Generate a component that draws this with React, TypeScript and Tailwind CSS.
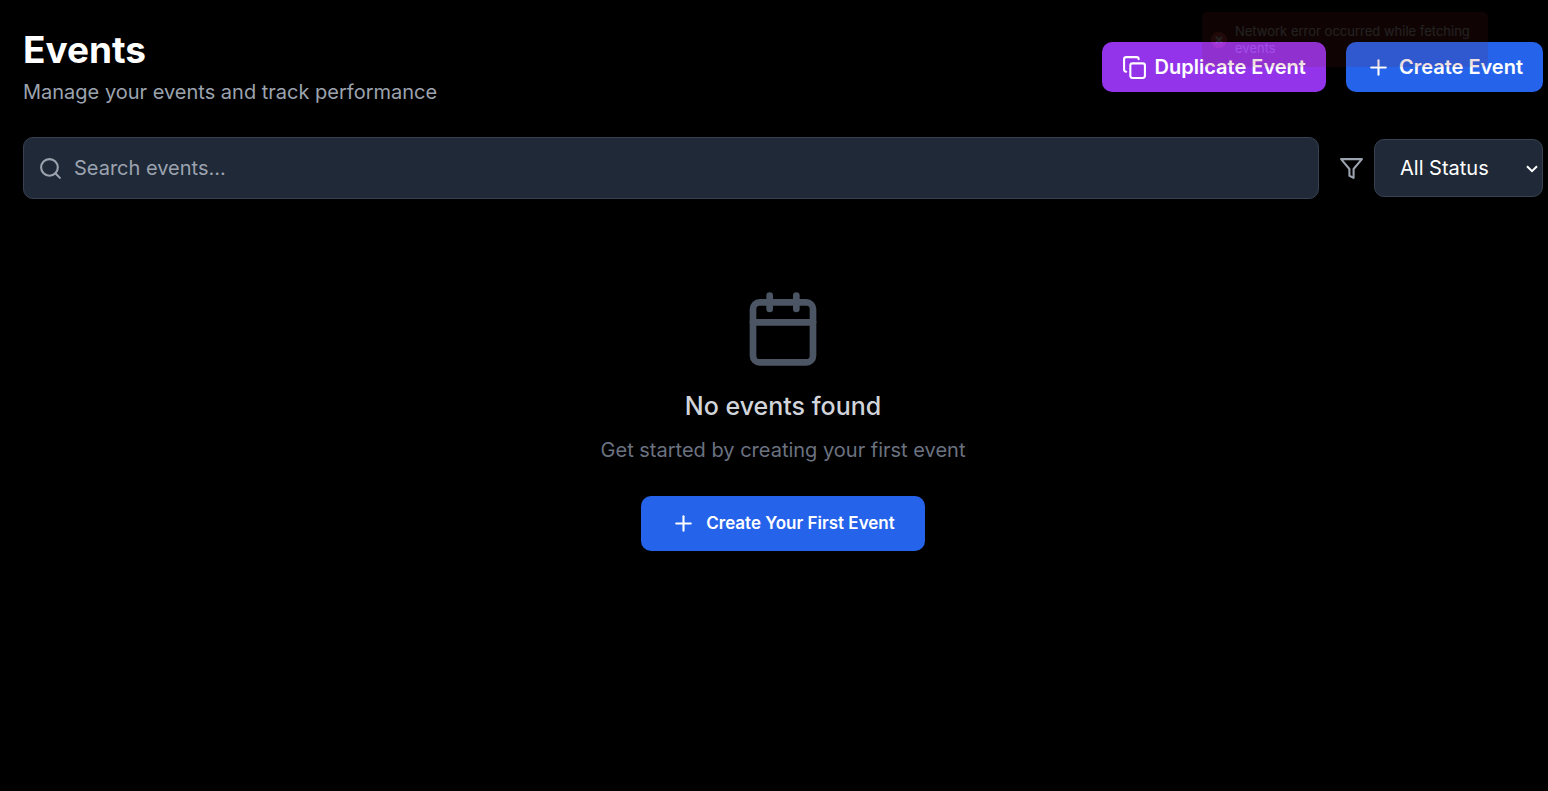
import { Calendar, Copy, Plus, Search } from "lucide-react";

export default function App() {
  return (
    <div className="min-h-screen bg-black pt-[25px] pr-[5px] pb-6 pl-[23px] font-['Inter',sans-serif] text-white">
      <header className="flex items-center justify-between">
        <div>
          <h1 className="text-[37px] leading-[50px] font-bold">Events</h1>
          <p className="text-[20px] leading-[34px] text-[#9ca3af]">Manage your events and track performance</p>
        </div>
        <div className="flex items-center gap-5">
          <button type="button" className="flex h-[50px] items-center gap-2 rounded-[10px] bg-[#9333ea] px-5 text-[20px] font-semibold">
            <Copy size={25} aria-hidden="true" />
            Duplicate Event
          </button>
          <button type="button" className="flex h-[50px] items-center gap-2 rounded-[10px] bg-[#2563eb] px-5 text-[20px] font-semibold">
            <Plus size={25} aria-hidden="true" />
            Create Event
          </button>
        </div>
      </header>

      <div className="mt-7 flex items-center gap-5">
        <label className="flex h-[62px] flex-1 items-center gap-[11px] rounded-[10px] border border-[#374151] bg-[#1f2937] px-3.5">
          <Search size={25} className="shrink-0 text-[#9ca3af]" aria-hidden="true" />
          <input
            type="search"
            aria-label="Search events"
            placeholder="Search events..."
            className="w-full bg-transparent text-[20px] outline-none placeholder:text-[#9ca3af]"
          />
        </label>
        <div className="flex items-center gap-2.5">
          <svg width="25" height="25" viewBox="0 0 24 24" fill="none" stroke="currentColor" strokeWidth="2" strokeLinejoin="round" className="text-[#9ca3af]" aria-hidden="true">
            <path d="M22 3H2l8 9.46V19l4 2v-8.54L22 3z" />
          </svg>
          <div className="relative">
            <select aria-label="Status" defaultValue="all" className="h-[58px] w-[169px] appearance-none rounded-[10px] border border-[#374151] bg-[#1f2937] pl-[25px] text-[20px] text-white">
              <option value="all">All Status</option>
            </select>
            <svg width="12" height="8" viewBox="0 0 12 8" fill="none" stroke="#fff" strokeWidth="2" className="pointer-events-none absolute top-[26px] right-[5px]" aria-hidden="true">
              <path d="M1 1.2l5 5 5-5" />
            </svg>
          </div>
        </div>
      </div>

      <main className="flex flex-col items-center pt-[90px]">
        <Calendar size={80} className="text-[#4b5563]" aria-hidden="true" />
        <h2 className="mt-5 text-[25px] leading-[35px] font-medium text-[#d1d5db]">No events found</h2>
        <p className="mt-2.5 text-[20px] leading-[32px] text-[#6b7280]">Get started by creating your first event</p>
        <button type="button" className="mt-[30px] flex h-[55px] items-center gap-2.5 rounded-[10px] bg-[#2563eb] px-[30px] text-[17px] font-semibold">
          <Plus size={25} aria-hidden="true" />
          Create Your First Event
        </button>
      </main>

      <div role="status" className="pointer-events-none absolute top-3 right-[60px] flex h-[55px] w-[286px] items-center gap-2 rounded-[5px] bg-[#7f1d1d] px-[9px] text-[13px] leading-[17px] opacity-[0.13]">
        <svg width="16" height="16" viewBox="0 0 16 16" className="shrink-0" aria-hidden="true">
          <circle cx="8" cy="8" r="8" fill="#ff4b4b" />
          <path d="M5 5l6 6M11 5l-6 6" stroke="#fff" strokeWidth="2" />
        </svg>
        <span>Network error occurred while fetching events</span>
      </div>
    </div>
  );
}
